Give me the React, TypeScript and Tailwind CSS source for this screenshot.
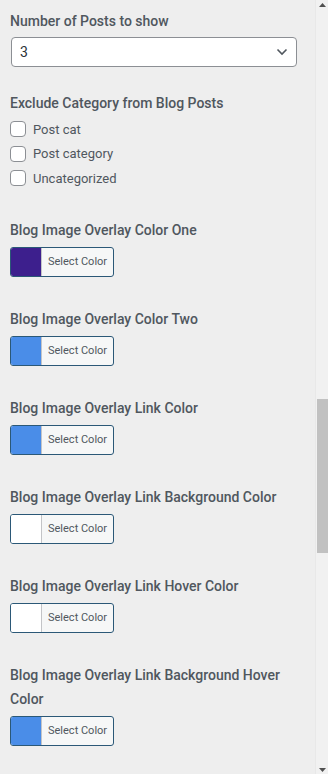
import React from "react";

const labelCls = "text-[14px] leading-[24px] font-medium text-[#50575e]";

const colorFields = [
  { label: "Blog Image Overlay Color One", color: "bg-[#3d1f8d]" },
  { label: "Blog Image Overlay Color Two", color: "bg-[#4a8de8]" },
  { label: "Blog Image Overlay Link Color", color: "bg-[#4a8de8]" },
  { label: "Blog Image Overlay Link Background Color", color: "bg-white" },
  { label: "Blog Image Overlay Link Hover Color", color: "bg-white" },
  { label: "Blog Image Overlay Link Background Hover Color", color: "bg-[#4a8de8]" },
];

const categories = ["Post cat", "Post category", "Uncategorized"];

const ColorButton = ({ color }: { color: string }) => (
  <button className="mt-[5px] flex h-[30px] w-[104px] overflow-hidden rounded-[3px] border border-[#2b5877] bg-[#f6f7f7] p-0 text-left">
    <span className={`h-full w-[31px] border-r border-[#c3c4c7] ${color}`} />
    <span className="flex-1 pl-[6px] text-[11px] leading-[28px] text-[#50575e]">Select Color</span>
  </button>
);

const App = () => {
  return (
    <div className="flex h-[774px] w-[328px] overflow-hidden font-[Roboto,sans-serif]">
      <div className="w-[315px] bg-[#eeeeee] pl-[10px] pr-[18px] pt-[9px]">
        <div className={labelCls}>Number of Posts to show</div>
        <div className="mt-[4px] ml-px flex h-[30px] items-center justify-between rounded-[4px] border border-[#8c8f94] bg-white pl-[8px] pr-[8px]">
          <span className="text-[14px] text-[#2c3338]">3</span>
          <svg width="12" height="8" viewBox="0 0 12 8" fill="none">
            <path d="M1.5 1.5 6 6l4.5-4.5" stroke="#50575e" strokeWidth="1.6" />
          </svg>
        </div>

        <div className={`${labelCls} mt-[24px]`}>Exclude Category from Blog Posts</div>
        <div className="mt-[2px] flex flex-col">
          {categories.map((c) => (
            <label key={c} className="flex h-[24.5px] items-center gap-[7px]">
              <span className="h-[16px] w-[16px] rounded-[4px] border border-[#8c8f94] bg-white" />
              <span className="text-[13px] text-[#50575e]">{c}</span>
            </label>
          ))}
        </div>

        {colorFields.map((f, i) => (
          <div key={f.label} className={i === 0 ? "mt-[27.5px]" : "mt-[30px]"}>
            <div className={labelCls}>{f.label}</div>
            <ColorButton color={f.color} />
          </div>
        ))}
      </div>

      <div className="flex w-[13px] flex-col items-center border-l border-[#e8e8e8] bg-[#f1f1f1]">
        <svg className="mt-[3px]" width="7" height="4" viewBox="0 0 7 4">
          <path d="M0 4 3.5 0 7 4z" fill="#505050" />
        </svg>
        <div className="ml-px mt-[392px] h-[154px] w-full bg-[#c1c1c1]" />
        <div className="flex-1" />
        <svg className="mb-[2px]" width="7" height="4" viewBox="0 0 7 4">
          <path d="M0 0 3.5 4 7 0z" fill="#505050" />
        </svg>
      </div>
    </div>
  );
};

export default App;
